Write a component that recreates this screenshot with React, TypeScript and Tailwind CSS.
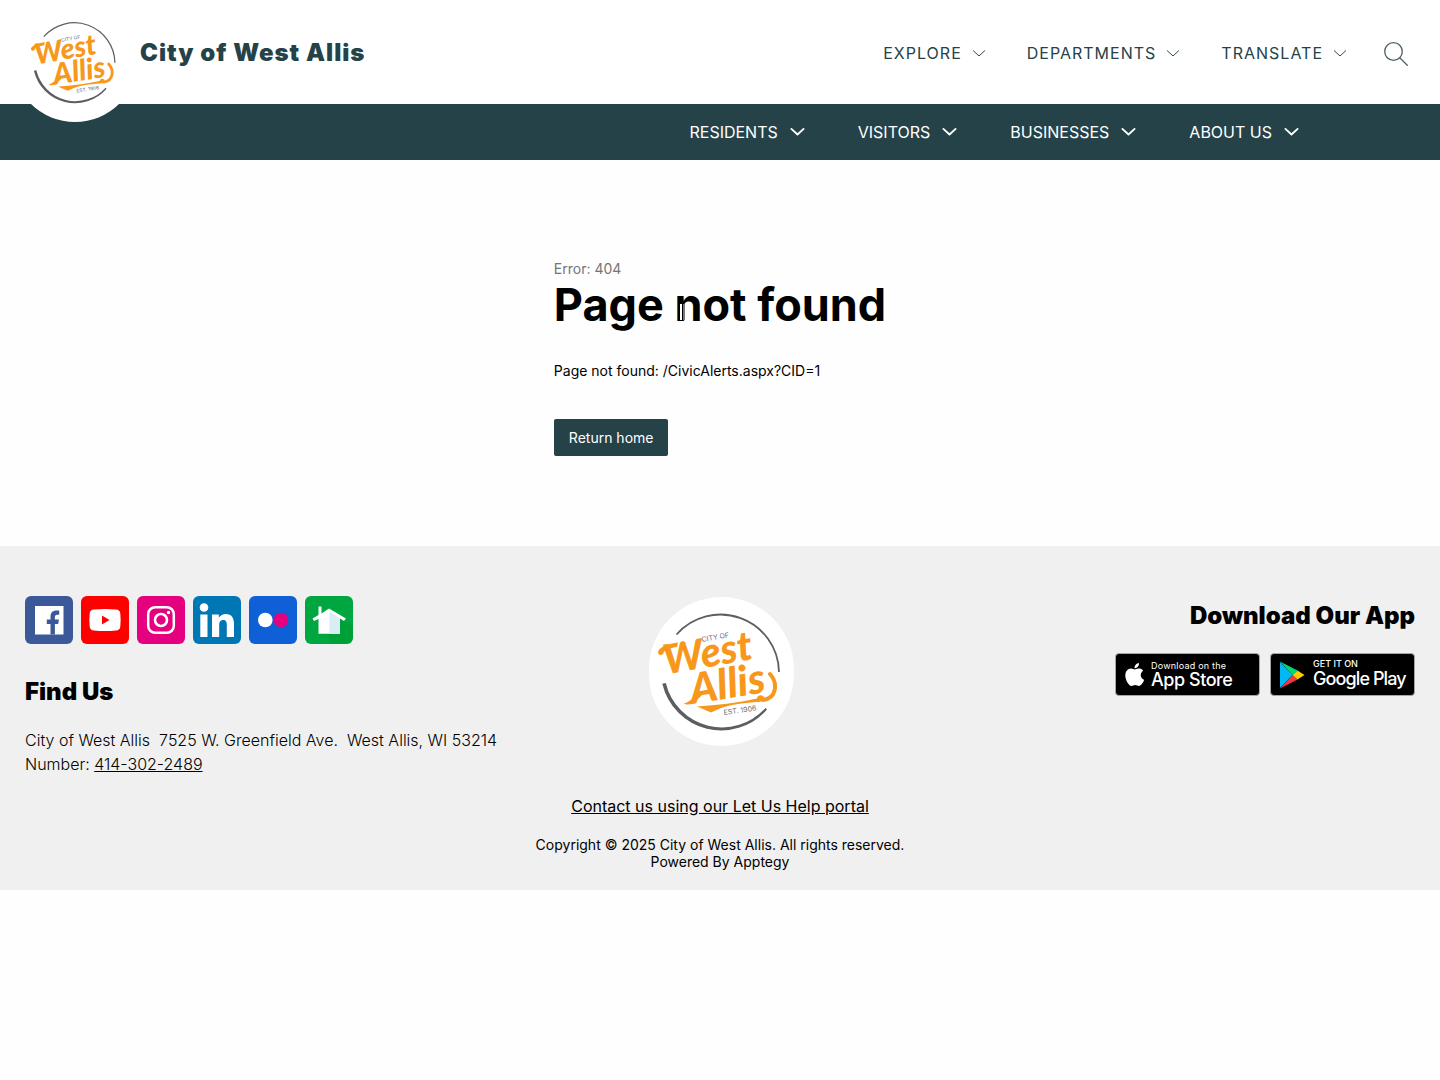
import React from "react";

function Chevron({ className, stroke }: { className: string; stroke: number }) {
  return (
    <svg viewBox="0 0 16 10" className={className} fill="none" stroke="currentColor" strokeWidth={stroke} strokeLinecap="round" strokeLinejoin="round" aria-hidden="true">
      <path d="M1.500 2 8 8l6.500-6" />
    </svg>
  );
}

function WestAllisLogo({ className }: { className: string }) {
  return (
    <svg viewBox="22 27 121 120" className={className} overflow="visible" role="img" aria-label="City of West Allis logo">
      <path d="M37.500 49.500A58.500 58.500 0 0 1 140 87" fill="none" stroke="#5d5e62" strokeWidth="1.800" />
      <path d="M23.300 98.800 26.800 98A58 58 0 0 0 126.500 123L128 124.500A60.500 60.500 0 0 1 23.300 98.800Z" fill="#5d5e62" />
      <g fontFamily="Lato" fontStyle="italic" fontWeight="900" fill="#f7981d">
        <text transform="translate(27 89.500) rotate(-10)" fontSize="41">West</text>
        <text transform="translate(53 119) rotate(-9)" fontSize="42">Allis</text>
      </g>
      <path d="M39 57.500C30 58.500 20 62 19 67c-.3 3 4 4 5.500 1.500C24 66 29 63.500 38 62Z" fill="#f7981d" />
      <path d="M60 106C55 113 50 117 45 118.500c1.500 1.500 7 1.500 11-1.500l8-8Z" fill="#f7981d" />
      <path d="M58 121.500c20-1.500 40-3.500 60-8 .5-4 6-4 7-1 0 3.500-4 5-7.500 4.500C104 118 90 120 82 123L72 127.500Z" fill="#f7981d" />
      <path d="M131 89c8 9 7 24-7 26" fill="none" stroke="#f7981d" strokeWidth="4" strokeLinecap="round" />
      <g fontFamily="Inter" fill="#6b6c70">
        <text transform="translate(63 57) rotate(-10)" fontSize="7">CITY OF</text>
        <text transform="translate(85 130) rotate(-8)" fontSize="7">EST. 1906</text>
      </g>
    </svg>
  );
}

const exploreMenus = ["EXPLORE", "DEPARTMENTS", "TRANSLATE"];
const siteMenus = ["RESIDENTS", "VISITORS", "BUSINESSES", "ABOUT US"];

const socials = [
  {
    name: "Facebook",
    color: "bg-[#3b5998]",
    art: (
      <>
        <path d="M10 10h28.500v28.500H10z" fill="#fff" />
        <path d="M25.500 38.500V28h-3.700v-4.500h3.700V20.500c0-4 2.500-6 6-6h2.700v4.300h-2c-1.800 0-2.300.9-2.300 2.400v2.300h4L33.200 28h-3.300v10.500Z" fill="#3b5998" />
      </>
    ),
  },
  {
    name: "YouTube",
    color: "bg-[#ff0000]",
    art: (
      <>
        <path d="M13 13.500q11-1 22 0 4 .3 4.300 4 .7 6.500 0 13-.3 3.700-4.300 4-11 1-22 0-4-.3-4.300-4-.7-6.500 0-13 .3-3.700 4.300-4Z" fill="#fff" />
        <path d="m21 19.500 7.500 4.500-7.500 4.500Z" fill="#f00" />
      </>
    ),
  },
  {
    name: "Instagram",
    color: "bg-[#e4007f]",
    art: (
      <>
        <rect x="11.200" y="11.200" width="25.600" height="25.600" rx="7" fill="none" stroke="#fff" strokeWidth="2.500" />
        <circle cx="24" cy="24" r="6" fill="none" stroke="#fff" strokeWidth="2.600" />
        <circle cx="31.500" cy="16.500" r="1.700" fill="#fff" />
      </>
    ),
  },
  {
    name: "LinkedIn",
    color: "bg-[#0077b5]",
    art: (
      <g fill="#fff">
        <circle cx="11" cy="11.500" r="4.300" />
        <path d="M7.300 18.500h7.200V41H7.300zM19 18.500h6.800v3.200c1.500-2.500 4-3.800 7-3.800 6 0 8.200 4 8.200 9.800V41h-7.200V29c0-3-.8-5-3.600-5-3 0-4 2.200-4 5v12H19Z" />
      </g>
    ),
  },
  {
    name: "Flickr",
    color: "bg-[#0f5fd6]",
    art: (
      <>
        <circle cx="16.300" cy="24" r="7.300" fill="#fff" />
        <circle cx="32" cy="24" r="7.300" fill="#e4007f" />
      </>
    ),
  },
  {
    name: "Nextdoor",
    color: "bg-[#00a63f]",
    art: (
      <>
        <path d="M24 12.500 48 31v9a8 8 0 0 1-8 8H24Z" fill="#00a038" />
        <path d="M13.500 10.500h3v7l7.500-5L41 22.500 39 25l-4-2.500v15.200H13.500V23L9 25l-1.500-2.500 6-3.500Z" fill="#fff" />
        <path d="M24.500 15.500 35 22.500v15.200H24.500Z" fill="#d9edf5" />
      </>
    ),
  },
];

export default function App() {
  return (
    <div className="min-h-screen bg-[#fefefe] font-['Inter',sans-serif] text-black">
      <header>
        <div className="flex h-26 items-start justify-between bg-white pr-8 pl-3">
          <div className="flex items-start">
            <a href="#home" className="relative z-10 -mt-1 flex size-[126px] shrink-0 items-center justify-center rounded-full bg-white pt-2">
              <WestAllisLogo className="w-[84px]" />
            </a>
            <a href="#home" className="pt-[37px] pl-0.5 text-2xl leading-8 font-black tracking-[1px] text-[#254249]">City of West Allis</a>
          </div>
          <nav aria-label="Explore" className="flex h-[106px] items-center gap-[41px] text-[#254249]">
            {exploreMenus.map((label) => (
              <button key={label} type="button" className="flex items-center gap-2.5 text-base tracking-[1px]">
                {label}
                <Chevron className="w-3.5" stroke={1.1} />
              </button>
            ))}
            <button type="button" aria-label="Search" className="-ml-1 pt-0.5">
              <svg viewBox="0 0 24 24" className="size-6" fill="none" stroke="#4b6065" strokeWidth="1.300" strokeLinecap="round" aria-hidden="true">
                <circle cx="9.500" cy="9.500" r="8.800" />
                <path d="m16 16 7.300 7.300" />
              </svg>
            </button>
          </nav>
        </div>
        <nav aria-label="Main" className="flex h-14 items-center justify-end gap-[53px] bg-[#254249] pr-[141px] text-white">
          {siteMenus.map((label) => (
            <button key={label} type="button" className="flex items-center gap-3 text-base">
              {label}
              <Chevron className="w-[15px]" stroke={2} />
            </button>
          ))}
        </nav>
      </header>

      <main className="flex justify-center pt-[100px] pb-[90px]">
        <div>
          <p className="text-sm leading-[18px] text-[#757575]">Error: 404</p>
          <h1 className="relative text-[45px] leading-[54px] font-bold">
            Page not found
            <svg viewBox="0 0 8 18" className="absolute top-[25px] left-[126px] h-[18px] w-2" aria-hidden="true">
              <path d="M0 1h2v16H0zM5 1h1v16H5z" fill="#fff" />
              <path d="M3 1h2v16H3z" fill="#777" />
            </svg>
          </h1>
          <p className="mt-7 text-sm leading-[22px]">Page not found: /CivicAlerts.aspx?CID=1</p>
          <a href="#home" className="mt-[37px] inline-block rounded-xs bg-[#254249] px-[15px] text-sm leading-[37px] text-white">Return home</a>
        </div>
      </main>

      <footer className="bg-[#f0f0f0] px-[25px] pt-[50px] pb-5">
        <div className="grid grid-cols-[1fr_auto_1fr] items-start">
          <div>
            <div className="flex gap-2">
              {socials.map((s) => (
                <a key={s.name} href={"#" + s.name.toLowerCase()} aria-label={s.name} className={"size-12 overflow-hidden rounded-md " + s.color}>
                  <svg viewBox="0 0 48 48" className="size-12" aria-hidden="true">{s.art}</svg>
                </a>
              ))}
            </div>
            <h2 className="mt-8 text-2xl leading-8 font-black">Find Us</h2>
            <p className="mt-5 text-base leading-6 font-light whitespace-pre">{"City of West Allis  7525 W. Greenfield Ave.  West Allis, WI 53214"}</p>
            <p className="text-base leading-6 font-light">
              Number: <a href="tel:414-302-2489" className="underline">414-302-2489</a>
            </p>
          </div>
          <div className="mt-px ml-0.5 flex h-[149px] w-[145px] items-center justify-center rounded-full bg-white">
            <WestAllisLogo className="w-[121px]" />
          </div>
          <div className="flex flex-col items-end">
            <h2 className="mt-1 text-2xl leading-8 font-black">Download Our App</h2>
            <div className="mt-[21px] flex gap-2.5 text-white">
              <a href="#app-store" className="flex h-[43px] w-[145px] items-center gap-1.5 rounded-sm border border-[#a6a6a6] bg-black pl-[7px]">
                <svg viewBox="2 2 18 21" className="h-[26px] w-[22px]" fill="#fff" aria-hidden="true">
                  <path d="M16.500 12.500c0-2.300 1.900-3.400 2-3.500-1.100-1.600-2.800-1.800-3.400-1.800-1.400-.2-2.800.8-3.500.8s-1.800-.8-3-.8C7 7.200 5.500 8.100 4.700 9.500c-1.700 2.900-.4 7.200 1.200 9.500.8 1.200 1.700 2.400 3 2.400 1.200 0 1.700-.8 3.100-.8s1.900.8 3.100.8c1.300 0 2.100-1.200 2.900-2.300.9-1.300 1.300-2.600 1.300-2.700 0 0-2.800-1-2.800-3.900ZM14.200 5.600c.6-.8 1.100-1.900.9-2.900-.9 0-2.100.6-2.700 1.400-.6.700-1.100 1.800-1 2.800 1.100.1 2.100-.5 2.800-1.300Z" />
                </svg>
                <span className="flex flex-col">
                  <span className="text-[9px] leading-[10px] tracking-wide">Download on the</span>
                  <span className="text-lg leading-[18px] font-medium tracking-tight">App Store</span>
                </span>
              </a>
              <a href="#google-play" className="flex h-[43px] w-[145px] items-center gap-2 rounded-sm border border-[#a6a6a6] bg-black pl-2">
                <svg viewBox="0 0 26 28" className="h-7 w-[26px] shrink-0" aria-hidden="true">
                  <path d="M1 1v26l12.500-13Z" fill="#00b8f5" />
                  <path d="M1 .5 18.500 9.500 13.500 14Z" fill="#00d977" />
                  <path d="M1 27.500 18.500 18.500 13.500 14Z" fill="#f33548" />
                  <path d="M18.500 9.500 25.500 14l-7 4.500-5-4.500Z" fill="#ffc900" />
                </svg>
                <span className="flex flex-col pb-1">
                  <span className="text-[9px] leading-[11px] font-medium">GET IT ON</span>
                  <span className="text-lg leading-[19px] font-medium tracking-tighter whitespace-nowrap">Google Play</span>
                </span>
              </a>
            </div>
          </div>
        </div>
        <div className="mt-[18px] text-center">
          <a href="#help" className="text-base leading-6 underline">Contact us using our Let Us Help portal</a>
          <p className="mt-[18px] text-sm leading-[17px]">
            Copyright © 2025 City of West Allis. All rights reserved.
            <br />
            Powered By Apptegy
          </p>
        </div>
      </footer>
    </div>
  );
}
